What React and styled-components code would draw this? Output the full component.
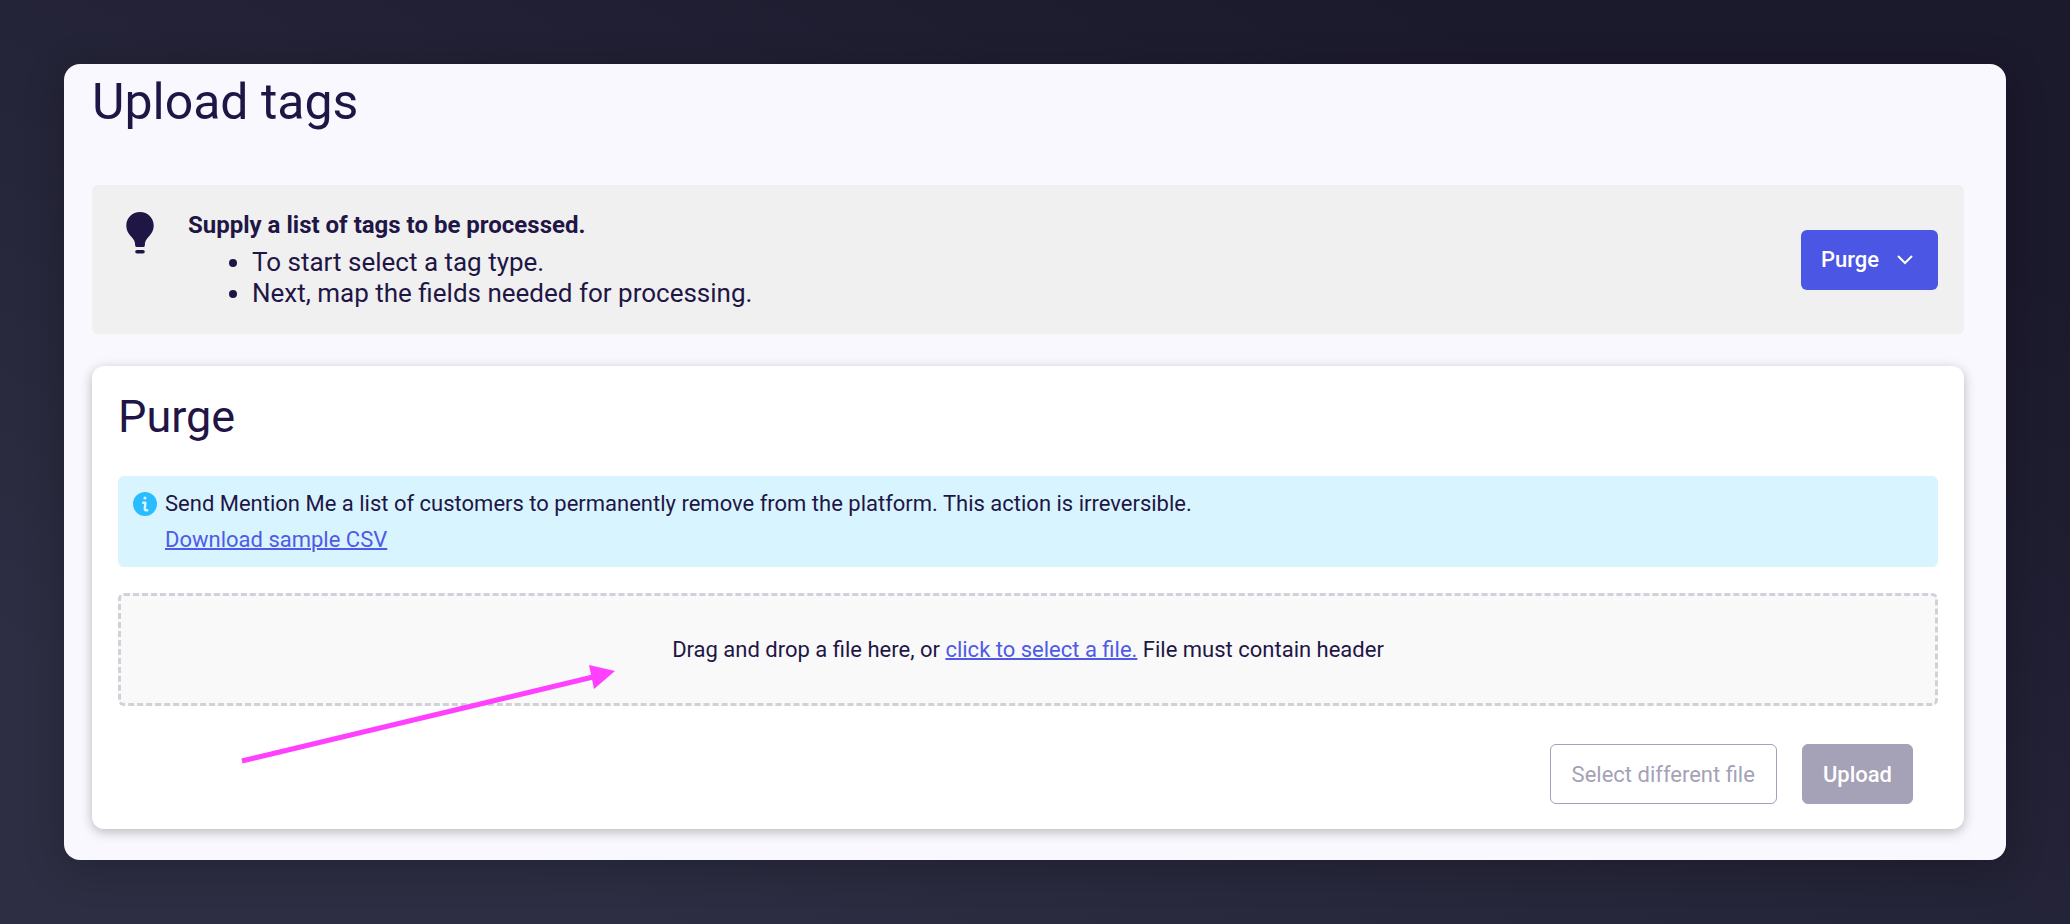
import React, { useRef, useState } from "react";
import styled, { createGlobalStyle } from "styled-components";

const App = () => {
    const [tagType, setTagType] = useState("purge");
    const fileInput = useRef(null);

    const openFilePicker = (e) => {
        e.preventDefault();
        fileInput.current.click();
    };

    return (
        <>
            <GlobalStyle />
            <Backdrop>
                <Page>
                    <Title>Upload tags</Title>

                    <Hint>
                        <BulbIcon viewBox="0 0 28 42" aria-hidden="true">
                            <path d="M14 0C6.2 0 .3 6 .3 13.400c0 5.200 2.600 8.600 5.300 11.600 2.400 2.700 3.600 4.700 3.600 8.600 0 1 .5 1.400 1.400 1.400h6.800c.9 0 1.400-.4 1.400-1.400 0-3.900 1.200-5.900 3.600-8.600 2.700-3 5.300-6.400 5.300-11.600C27.700 6 21.800 0 14 0z" />
                            <rect x="9.200" y="38" width="9.600" height="3.600" rx="1.800" />
                        </BulbIcon>
                        <HintText>
                            <HintHeading>Supply a list of tags to be processed.</HintHeading>
                            <HintList>
                                <li>To start select a tag type.</li>
                                <li>Next, map the fields needed for processing.</li>
                            </HintList>
                        </HintText>
                        <TypePicker>
                            <TypeSelect
                                aria-label="Tag type"
                                value={tagType}
                                onChange={(e) => setTagType(e.target.value)}
                            >
                                <option value="purge">Purge</option>
                            </TypeSelect>
                            <Chevron viewBox="0 0 16 10" aria-hidden="true">
                                <path d="M1 1l7 7 7-7" />
                            </Chevron>
                        </TypePicker>
                    </Hint>

                    <Card>
                        <CardTitle>Purge</CardTitle>

                        <Info>
                            <InfoIcon viewBox="0 0 24 24" aria-hidden="true">
                                <circle cx="12" cy="12" r="12" />
                                <circle className="mark" cx="12" cy="6" r="1.600" />
                                <path d="M10.200 10.800h2.200l-.6 6c-.1 1 .4 1.500 1.200 1.500h1.200" />
                            </InfoIcon>
                            <InfoText>
                                <p>
                                    Send Mention Me a list of customers to permanently remove from
                                    the platform. This action is irreversible.
                                </p>
                                <TextLink href="#sample">Download sample CSV</TextLink>
                            </InfoText>
                        </Info>

                        <DropZone>
                            <p>
                                Drag and drop a file here, or{" "}
                                <TextLink href="#file" onClick={openFilePicker}>
                                    click to select a file.
                                </TextLink>{" "}
                                File must contain header
                            </p>
                            <input ref={fileInput} type="file" accept=".csv" aria-label="Tag file" hidden />
                        </DropZone>

                        <Actions>
                            <Button type="button" disabled>Select different file</Button>
                            <Button type="button" $filled disabled>Upload</Button>
                        </Actions>

                        <Arrow viewBox="0 0 376 100" aria-hidden="true">
                            <path d="M1 96L352 12" />
                            <polygon points="348,0 374,6 353,24" />
                        </Arrow>
                    </Card>
                </Page>
            </Backdrop>
        </>
    );
};

export default App;

const GlobalStyle = createGlobalStyle`
    * {
        box-sizing: border-box;
    }

    body {
        margin: 0;
        font-family: Roboto, "Liberation Sans", sans-serif;
        color: #1f1646;
    }

    h1, h2, p, ul {
        margin: 0;
        font-weight: 400;
    }
`;

const Backdrop = styled.div`
    min-height: 100vh;
    padding: 64px;
    background: linear-gradient(to top right, #2d2e43 15%, #1b192c 85%);
`;

const Page = styled.main`
    padding: 4px 42px 31px 28px;
    border-radius: 16px;
    background: #f9f8fe;
    box-shadow: 0 8px 40px rgba(0, 0, 0, 0.24);
`;

const Title = styled.h1`
    font-size: 50px;
    line-height: 68px;
    margin-bottom: 49px;
`;

const Hint = styled.section`
    display: flex;
    align-items: center;
    padding: 25px 26px 25px 34px;
    border-radius: 6px;
    background: #f0f0f0;
    font-size: 26px;
    line-height: 31px;
`;

const BulbIcon = styled.svg`
    align-self: flex-start;
    width: 28px;
    height: 42px;
    margin: 2px 34px 0 0;
    fill: #1f1646;
`;

const HintText = styled.div`
    flex: 1;
`;

const HintHeading = styled.p`
    margin-bottom: 6px;
    font-size: 24px;
    font-weight: 700;
`;

const HintList = styled.ul`
    padding-left: 64px;
`;

const TypePicker = styled.div`
    display: grid;
    align-items: center;
    color: #ffffff;

    & > * {
        grid-area: 1 / 1;
    }
`;

const TypeSelect = styled.select`
    appearance: none;
    height: 60px;
    padding: 0 58px 0 20px;
    border: none;
    border-radius: 6px;
    background: #4b56e4;
    color: inherit;
    font-family: inherit;
    font-size: 22px;
    font-weight: 500;
    cursor: pointer;
`;

const Chevron = styled.svg`
    justify-self: end;
    width: 16px;
    height: 10px;
    margin-right: 25px;
    fill: none;
    stroke: currentColor;
    stroke-width: 2;
    pointer-events: none;
`;

const Card = styled.section`
    position: relative;
    margin-top: 32px;
    padding: 24px 26px 25px;
    border-radius: 12px;
    background: #ffffff;
    box-shadow: 0 3px 12px rgba(0, 0, 0, 0.26);
`;

const CardTitle = styled.h2`
    margin-bottom: 32px;
    font-size: 45px;
    line-height: 54px;
`;

const Info = styled.div`
    display: flex;
    gap: 8px;
    padding: 10px 15px 9px;
    border-radius: 6px;
    background: #d8f4ff;
    font-size: 22px;
    line-height: 36px;
`;

const InfoIcon = styled.svg`
    width: 24px;
    height: 24px;
    margin-top: 6px;
    fill: #29bdff;

    & .mark {
        fill: #d8f4ff;
    }

    & path {
        fill: none;
        stroke: #d8f4ff;
        stroke-width: 2.4;
        stroke-linecap: round;
        stroke-linejoin: round;
    }
`;

const InfoText = styled.div`
    flex: 1;
`;

const TextLink = styled.a`
    color: #4f5be6;
    text-decoration: underline;
    text-decoration-thickness: 2px;
`;

const DropZone = styled.div`
    margin-top: 26px;
    padding: 36px;
    border: 3px dashed #d2d1da;
    border-radius: 6px;
    background: #f9f9f9;
    font-size: 22px;
    line-height: 35px;
    text-align: center;
`;

const Actions = styled.div`
    display: flex;
    justify-content: flex-end;
    gap: 25px;
    margin-top: 38px;
    padding-right: 25px;
`;

const Button = styled.button`
    height: 60px;
    padding: ${({ $filled }) => ($filled ? "0 20px" : "0 21px")};
    border: 1px solid #a5a1b6;
    border-radius: 6px;
    background: ${({ $filled }) => ($filled ? "#a5a1b6" : "#ffffff")};
    color: ${({ $filled }) => ($filled ? "#ffffff" : "#a5a1b6")};
    font-family: inherit;
    font-size: 22px;
    font-weight: ${({ $filled }) => ($filled ? 500 : 400)};
`;

/* Pointer drawn over the card towards the drop zone text */
const Arrow = styled.svg`
    position: absolute;
    left: 149px;
    bottom: 64px;
    width: 376px;
    height: 100px;
    fill: #ff40ff;
    pointer-events: none;

    & path {
        stroke: #ff40ff;
        stroke-width: 5;
    }
`;
